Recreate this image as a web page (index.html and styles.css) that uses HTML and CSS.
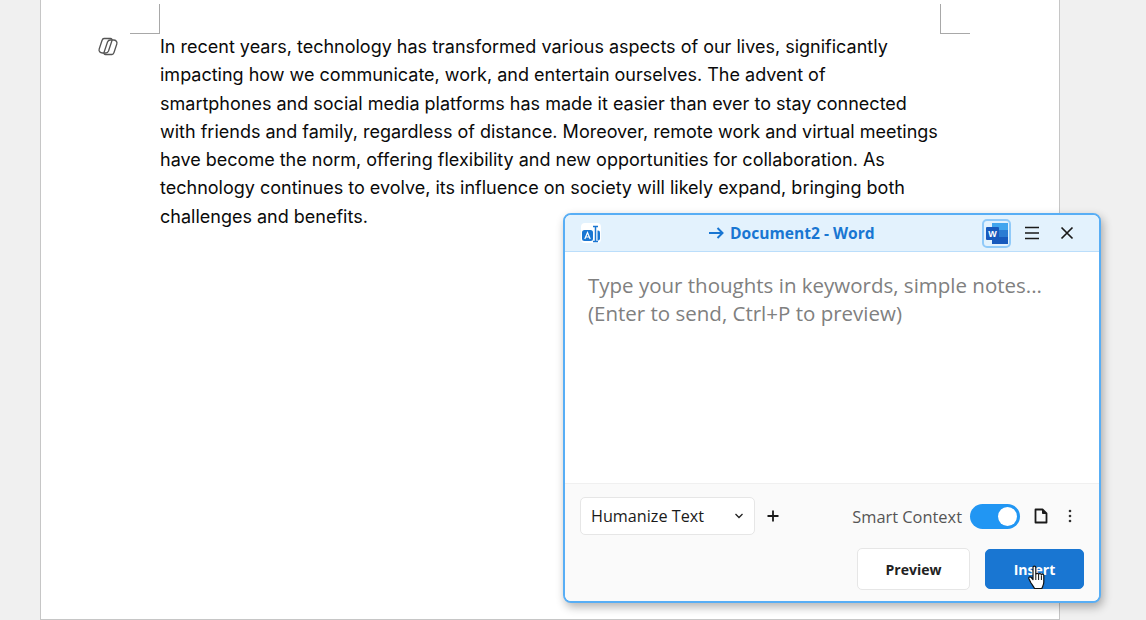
FILE: index.html
```html
<!DOCTYPE html>
<html lang="en">
<head>
<meta charset="utf-8">
<title>Document2 - Word</title>
<link rel="stylesheet" href="styles.css">
</head>
<body>
<main class="page">
  <div class="sheet-top">
    <span class="crop crop-left"></span>
    <span class="crop crop-right"></span>
  </div>
  <svg class="copilot" width="22" height="20" viewBox="0 0 22 20" fill="none" stroke="#555" stroke-width="1.300" stroke-linejoin="round">
    <path d="M7 2.500h6.500c1.200 0 1.900 1 1.500 2L11.500 15c-.5 1.200-1.500 2-2.700 2H5.500c-2.500 0-4-2-3.300-4L5 4.500C5.400 3.300 6 2.500 7 2.500Z"/>
    <path transform="rotate(180 11 10.500)" d="M7 2.500h6.500c1.200 0 1.900 1 1.500 2L11.500 15c-.5 1.200-1.500 2-2.700 2H5.500c-2.500 0-4-2-3.300-4L5 4.500C5.400 3.300 6 2.500 7 2.500Z"/>
  </svg>
  <p class="doc-text">In recent years, technology has transformed various aspects of our lives, significantly impacting how we communicate, work, and entertain ourselves. The advent of smartphones and social media platforms has made it easier than ever to stay connected with friends and family, regardless of distance. Moreover, remote work and virtual meetings have become the norm, offering flexibility and new opportunities for collaboration. As technology continues to evolve, its influence on society will likely expand, bringing both challenges and benefits.</p>
</main>

<section class="popup">
  <header class="popup-head">
    <span class="logo">
      <svg width="20" height="20" viewBox="0 0 20 20">
        <rect x="0" y="0" width="20" height="20" rx="4" fill="#fff"/>
        <rect x="1" y="7" width="11" height="11" rx="2.500" fill="#1976d2"/>
        <path d="M3.800 16l2.700-6.500L9.200 16M4.800 14h3.400" fill="none" stroke="#fff" stroke-width="1.200"/>
        <path d="M12 3.500h5M14.500 3.500v14.500M12 18.500h5" fill="none" stroke="#1976d2" stroke-width="1.500"/>
        <path d="M16.500 7.500h.5a2 2 0 0 1 2 2v6a2 2 0 0 1-2 2h-.5z" fill="#1976d2"/>
      </svg>
    </span>
    <h1 class="title">
      <svg class="arrow" width="15" height="12" viewBox="0 0 15 12" fill="none" stroke="#1976d2" stroke-width="2"><path d="M0 6h13M8.500 1l5 5-5 5"/></svg>
      Document2 - Word
    </h1>
    <div class="head-tools">
      <span class="word-btn">
        <svg width="22" height="21" viewBox="0 0 22 21">
          <rect x="6" y="0" width="16" height="21" rx="1.500" fill="#2b7cd3"/>
          <rect x="6" y="0" width="16" height="7" fill="#41a5ee"/>
          <rect x="6" y="14" width="16" height="7" fill="#185abd"/>
          <rect x="0" y="4" width="13" height="13" rx="1" fill="#185abd"/>
          <text class="word-w" x="6.500" y="14" text-anchor="middle">W</text>
        </svg>
      </span>
      <svg class="tool" width="16" height="14" viewBox="0 0 16 14" stroke="#1a1a1a" stroke-width="1.700">
        <path d="M1 1.500h14M1 7h14M1 12.500h14"/>
      </svg>
      <svg class="tool close" width="14" height="14" viewBox="0 0 14 14" stroke="#1a1a1a" stroke-width="1.700">
        <path d="M1.500 1.500l11 11M12.500 1.500l-11 11"/>
      </svg>
    </div>
  </header>

  <div class="prompt">Type your thoughts in keywords, simple notes...<br>(Enter to send, Ctrl+P to preview)</div>

  <footer class="popup-foot">
    <div class="controls">
      <div class="select">
        <span>Humanize Text</span>
        <svg width="10" height="6" viewBox="0 0 10 6" fill="none" stroke="#222" stroke-width="1.300"><path d="M1.500 1l3.500 3.500L8.500 1"/></svg>
      </div>
      <svg class="plus" width="12" height="12" viewBox="0 0 12 12" stroke="#1a1a1a" stroke-width="1.800"><path d="M6 .5v11M.5 6h11"/></svg>
      <span class="smart-label">Smart Context</span>
      <span class="toggle"><span class="knob"></span></span>
      <svg class="file" width="14" height="16" viewBox="0 0 14 16" fill="none" stroke="#1a1a1a" stroke-width="1.800" stroke-linejoin="round"><path d="M1.500 1.500h7l4 4v9h-11z"/><path d="M8.500 1.500v4h4z" fill="#1a1a1a" stroke-width="1"/></svg>
      <svg class="dots" width="4" height="14" viewBox="0 0 4 14" fill="#333"><circle cx="2" cy="2" r="1.300"/><circle cx="2" cy="7" r="1.300"/><circle cx="2" cy="12" r="1.300"/></svg>
    </div>
    <div class="actions">
      <button class="btn btn-preview">Preview</button>
      <button class="btn btn-insert">Insert</button>
    </div>
  </footer>
  <svg class="cursor" width="18" height="26" viewBox="0 0 18 26">
    <path d="M5 2.500c0-1.800 2.800-1.800 2.800 0v7c.2-1.500 2.700-1.500 2.800 0 .2-1.300 2.600-1.300 2.800.3.300-1 2.400-.8 2.400.7v6.500c0 3-1 4-2 6.500H6.500c-1-2-2-3.200-3.500-5.500L1 14c-.8-1.800 1-2.800 2.300-1.500L5 14.500z" fill="#fff" stroke="#111" stroke-width="1.200" stroke-linejoin="round"/>
    <path d="M7.800 10v5M10.600 10v5M13.400 10.500v4.500" stroke="#111" stroke-width="1"/>
  </svg>
</section>
</body>
</html>
```
FILE: styles.css
```css
* { box-sizing: border-box; }
html, body { margin: 0; height: 100%; }
body {
  background: #f0f0f0;
  width: 1146px;
  height: 620px;
  overflow: hidden;
  position: relative;
}
.page {
  position: relative;
  width: 1020px;
  height: 620px;
  margin-left: 40px;
  background: #fff;
  border-left: 1px solid #c6c6c6;
  border-right: 1px solid #c6c6c6;
  border-bottom: 1px solid #c6c6c6;
  padding-left: 119px;
}
.sheet-top {
  display: flex;
  justify-content: space-between;
  width: 840px;
  margin-left: -30px;
  padding-top: 4px;
  height: 33px;
}
.crop {
  display: block;
  width: 30px;
  height: 30px;
  border-bottom: 1px solid #a8a8a8;
}
.crop-left { border-right: 1px solid #a8a8a8; }
.crop-right { border-left: 1px solid #a8a8a8; }
.copilot {
  position: absolute;
  left: 56px;
  top: 36px;
}
.doc-text {
  margin: 0;
  width: 779px;
  font-family: Inter, "Noto Sans", sans-serif;
  font-size: 18px;
  line-height: 28.3px;
  color: #0a0a0a;
}
.popup {
  position: absolute;
  left: 563px;
  top: 213px;
  width: 538px;
  height: 390px;
  background: #fff;
  border: 2px solid #58aef5;
  border-radius: 8px;
  box-shadow: 2px 4px 10px rgba(0, 0, 0, .3);
  display: flex;
  flex-direction: column;
  font-family: "Open Sans", "Noto Sans", sans-serif;
}
.popup-head {
  height: 37px;
  flex: none;
  display: flex;
  align-items: center;
  padding: 0 16px;
  background: #e3f2fd;
  border-bottom: 1px solid #bbdefb;
  border-radius: 6px 6px 0 0;
  position: relative;
}
.logo { display: flex; }
.title {
  position: absolute;
  left: 144px;
  top: 8px;
  margin: 0;
  display: flex;
  align-items: center;
  gap: 6px;
  font-size: 15.6px;
  line-height: 20px;
  font-weight: 700;
  color: #1976d2;
  white-space: nowrap;
}
.arrow { display: block; }
.head-tools {
  margin-left: auto;
  display: flex;
  align-items: center;
}
.word-btn {
  width: 29px;
  height: 29px;
  border: 2.500px solid #90caf9;
  border-radius: 5px;
  display: flex;
  align-items: center;
  justify-content: center;
}
.word-w {
  font: 700 9px "Liberation Sans", sans-serif;
  fill: #fff;
}
.tool { margin-left: 13px; }
.tool.close { margin-left: 20px; margin-right: 9px; }
.prompt {
  flex: 1;
  padding: 19px 23px 0;
  font-size: 20.5px;
  line-height: 28px;
  color: #808080;
}
.popup-foot {
  height: 118px;
  flex: none;
  background: #fafafa;
  border-top: 1px solid #f0f0f0;
  border-radius: 0 0 6px 6px;
  padding: 13px 15px 0;
}
.controls {
  display: flex;
  align-items: center;
  height: 38px;
}
.select {
  width: 175px;
  height: 38px;
  padding: 0 10px;
  background: #fff;
  border: 1.500px solid #e6e6e6;
  border-radius: 5px;
  display: flex;
  align-items: center;
  justify-content: space-between;
  font-size: 16.2px;
  color: #1a1a1a;
}
.plus { margin-left: 12px; }
.smart-label {
  margin-left: auto;
  font-size: 16.4px;
  color: #555;
}
.toggle {
  width: 50px;
  height: 25px;
  margin-left: 8px;
  padding: 3px;
  background: #2196f3;
  border-radius: 13px;
  display: flex;
  justify-content: flex-end;
}
.knob {
  width: 19px;
  height: 19px;
  background: #fff;
  border-radius: 50%;
}
.file { margin-left: 14px; }
.dots { margin-left: 20px; margin-right: 12px; }
.actions {
  display: flex;
  align-items: center;
  justify-content: flex-end;
  gap: 15px;
  margin-top: 13px;
}
.btn {
  font-family: inherit;
  font-size: 14px;
  font-weight: 700;
  border-radius: 5px;
  padding: 0;
}
.btn-preview {
  width: 113px;
  height: 42px;
  background: #fff;
  color: #222;
  border: 1.500px solid #e6e6e6;
}
.btn-insert {
  width: 99px;
  height: 40px;
  background: #1976d2;
  color: #fff;
  border: 1px solid #1976d2;
}
.cursor {
  position: absolute;
  left: 463px;
  top: 350px;
}
```
